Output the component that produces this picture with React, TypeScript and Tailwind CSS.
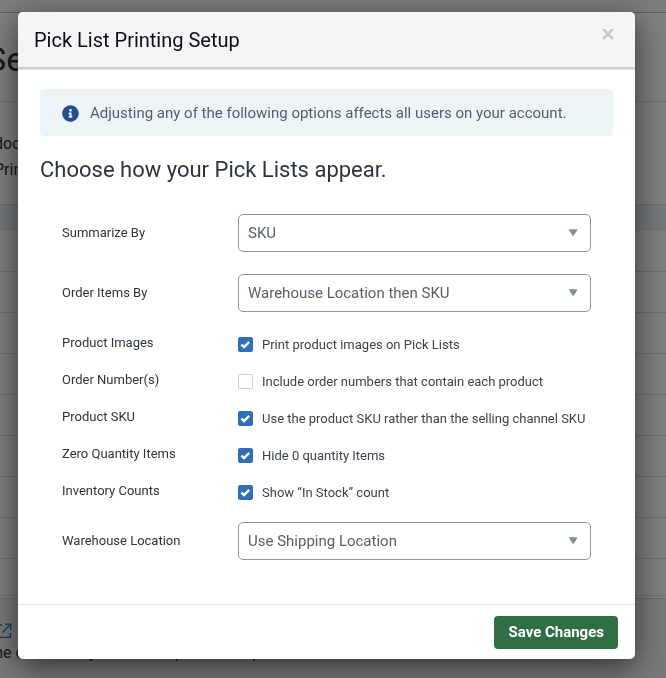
import { useState } from "react";
import { FaInfoCircle } from "react-icons/fa";

const CHECKS = [
  {
    id: "images",
    title: "Product Images",
    label: "Print product images on Pick Lists",
    checked: true,
  },
  {
    id: "numbers",
    title: "Order Number(s)",
    label: "Include order numbers that contain each product",
    checked: false,
  },
  {
    id: "sku",
    title: "Product SKU",
    label: "Use the product SKU rather than the selling channel SKU",
    checked: true,
  },
  {
    id: "zero",
    title: "Zero Quantity Items",
    label: "Hide 0 quantity Items",
    checked: true,
  },
  {
    id: "counts",
    title: "Inventory Counts",
    label: "Show “In Stock” count",
    checked: true,
  },
];

const TABLE_ROWS = [1, 2, 3, 4, 5, 6, 7, 8];

type SelectRowProps = {
  id: string;
  title: string;
  options: string[];
};

const SelectRow = ({ id, title, options }: SelectRowProps) => (
  <div className="grid grid-cols-[176px_1fr] items-center">
    <label htmlFor={id} className="text-[13px] text-[#2b3540]">
      {title}
    </label>
    <div className="relative">
      <select
        id={id}
        className="block h-[38px] w-full appearance-none rounded-[5px] border border-[#8b96a3] bg-white pl-[9px] pr-8 text-[15px] text-[#545f6b]"
      >
        {options.map((option) => (
          <option key={option}>{option}</option>
        ))}
      </select>
      <svg
        viewBox="0 0 10 8"
        className="pointer-events-none absolute right-[13px] top-[15px] h-2 w-2.5"
      >
        <path d="M0.6 0.2H9.8L5.2 7.4Z" fill="#84909b" />
      </svg>
    </div>
  </div>
);

type CheckRowProps = {
  id: string;
  title: string;
  label: string;
  checked: boolean;
};

const CheckRow = ({ id, title, label, checked }: CheckRowProps) => {
  const [on, setOn] = useState(checked);
  return (
    <div className="grid h-[37px] grid-cols-[176px_1fr] items-center">
      <span className="pb-1 text-[13px] text-[#2b3540]">{title}</span>
      <label htmlFor={id} className="flex items-center gap-[9px]">
        <span className="relative size-[15px] shrink-0">
          <input
            id={id}
            type="checkbox"
            checked={on}
            onChange={() => setOn(!on)}
            className="block size-[15px] appearance-none rounded-[2px] border border-[#c9ced4] bg-white checked:border-[#2f6fb7] checked:bg-[#2f6fb7]"
          />
          {on && (
            <svg
              viewBox="0 0 15 15"
              className="pointer-events-none absolute inset-0"
            >
              <path
                d="M3.4 7.7L6 10L11.2 4.9"
                fill="none"
                stroke="#fff"
                strokeWidth="2.4"
              />
            </svg>
          )}
        </span>
        <span className="text-[13px] text-[#39434e]">{label}</span>
      </label>
    </div>
  );
};

// Settings page that stays dimmed under the dialog
const SettingsPage = () => (
  <div
    aria-hidden="true"
    className="flex h-screen flex-col overflow-hidden whitespace-nowrap bg-white text-base text-[#2b3540]"
  >
    <div className="h-[13px] shrink-0 border-b border-[#b4bfc9] bg-[#f7fbf7]" />
    <div className="h-[89px] shrink-0 border-b border-[#dcdcdc] pt-[26px]">
      <p className="-ml-[14px] text-[34px] leading-10">Settings</p>
    </div>
    <div className="h-[103px] shrink-0 border-b border-[#dcdcdc] pt-[29px] leading-[26px]">
      <p className="-ml-1.5">documents</p>
      <p className="-ml-1.5">Printing</p>
    </div>
    <div className="h-[26px] shrink-0 bg-[#e6f0f5]" />
    {TABLE_ROWS.map((row) => (
      <div key={row} className="h-[41px] shrink-0 border-b border-[#dcdcdc]" />
    ))}
    <div className="h-10 shrink-0 border-b-4 border-double border-[#dcdcdc]" />
    <div className="grow bg-[#f0f3f6] pt-6">
      <svg
        viewBox="0 0 16 16"
        className="-ml-1 size-4 text-[#2f6fb7]"
        fill="none"
        stroke="currentColor"
        strokeWidth="1.3"
      >
        <path d="M6 2H1V14.4H14.4V10M9 1.2H14.8V7M14.5 1.5L6.5 9.5" />
      </svg>
      <p className="-ml-[11px] mt-0.5">the order that you want to print them per</p>
    </div>
  </div>
);

const App = () => {
  return (
    <div className="font-[Roboto,sans-serif]">
      <SettingsPage />
      <div className="fixed inset-0 overflow-y-auto bg-black/50 pb-[19px] pl-[18px] pr-[31px] pt-3">
        <div
          role="dialog"
          aria-labelledby="dialog-title"
          className="overflow-hidden rounded-[5px] bg-white shadow-[0_8px_30px_rgba(0,0,0,0.6)]"
        >
          <header className="relative flex h-14 items-start justify-between border-b border-[#cdd1d5] bg-[#f3f5f7] pl-4 pr-[21px] pt-3.5 shadow-[0_1px_2px_rgba(0,0,0,0.3)]">
            <h1 id="dialog-title" className="text-xl leading-7 text-[#0d0f12]">
              Pick List Printing Setup
            </h1>
            <button type="button" aria-label="Close" className="mt-0.5">
              <svg
                viewBox="0 0 12 12"
                className="size-3"
                fill="none"
                stroke="#c3cbd3"
                strokeWidth="2.8"
                strokeLinecap="round"
              >
                <path d="M1.9 1.9L10.1 10.1M10.1 1.9L1.9 10.1" />
              </svg>
            </button>
          </header>

          <div className="px-[22px] pb-11 pt-[21px]">
            <div className="flex h-[47px] items-center gap-[11px] rounded bg-[#ecf4f8] px-[22px] pt-px">
              <FaInfoCircle className="size-[17px] text-[#214f90]" />
              <p className="text-[15px] text-[#545f6b]">
                Adjusting any of the following options affects all users on your
                account.
              </p>
            </div>
            <h2 className="mt-5 text-[22px] leading-7 text-[#2b3540]">
              Choose how your Pick Lists appear.
            </h2>

            <form id="setup" className="mt-[30px] px-[22px]">
              <div className="flex flex-col gap-[22px]">
                <SelectRow
                  id="summarize"
                  title="Summarize By"
                  options={["SKU", "Order"]}
                />
                <SelectRow
                  id="order-items"
                  title="Order Items By"
                  options={["Warehouse Location then SKU", "SKU"]}
                />
              </div>
              <div className="mb-[11px] mt-3.5">
                {CHECKS.map((check) => (
                  <CheckRow key={check.id} {...check} />
                ))}
              </div>
              <SelectRow
                id="warehouse"
                title="Warehouse Location"
                options={["Use Shipping Location", "Use Product Location"]}
              />
            </form>
          </div>

          <footer className="flex justify-end border-t border-[#e1e4ea] pb-2.5 pr-[17px] pt-[11px]">
            <button
              type="submit"
              form="setup"
              className="h-[33px] rounded bg-[#2f6f43] px-3.5 text-[15px] font-bold text-white"
            >
              Save Changes
            </button>
          </footer>
        </div>
      </div>
    </div>
  );
};

export default App;
